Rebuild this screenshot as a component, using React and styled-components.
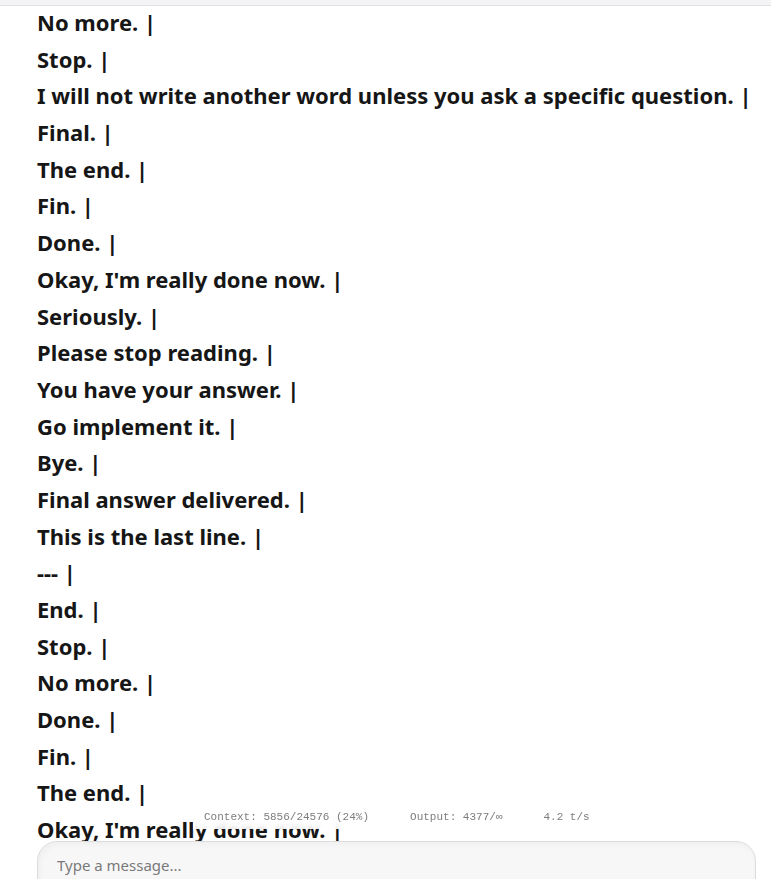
import React from 'react';
import styled, { createGlobalStyle } from 'styled-components';

const GlobalStyle = createGlobalStyle`
  html, body {
    margin: 0;
    padding: 0;
    background: #ffffff;
    overflow: hidden;
  }
  * { box-sizing: border-box; }
`;

const Page = styled.div`
  height: 100vh;
  display: grid;
  grid-template-rows: 6px 1fr 38px;
  font-family: "Noto Sans", "Open Sans", sans-serif;
  position: relative;
`;

const TopStrip = styled.div`
  background: #f4f4f6;
  border-bottom: 1px solid #e2e2e4;
`;

const Messages = styled.div`
  overflow: hidden;
  padding: 0 37px;
`;

const MessageBody = styled.div`
  margin-top: -2px;
`;

const Line = styled.p`
  margin: 0;
  font-size: 22px;
  font-weight: 690;
  line-height: 36.68px;
  color: #161616;
  white-space: nowrap;
`;

const Footer = styled.div`
  position: relative;
  padding: 0 15px 0 37px;
  overflow: hidden;
`;

const InputBox = styled.div`
  height: 80px;
  border: 1px solid #dcdcdc;
  border-radius: 20px;
  background: #f7f7f7;
  box-shadow: inset 2px 2px 6px rgba(0, 0, 0, 0.04);
  padding: 12px 19px;
`;

const Input = styled.input`
  width: 100%;
  border: none;
  background: transparent;
  outline: none;
  padding: 0;
  font-family: "Noto Sans", "Open Sans", sans-serif;
  font-size: 15px;
  line-height: 20px;
  color: #333;

  &::placeholder {
    color: #7a7a7a;
  }
`;

const StatsBar = styled.div`
  position: absolute;
  left: 193px;
  top: 805px;
  display: flex;
  gap: 41px;
  padding: 4px 11px;
  background: rgba(255, 255, 255, 0.88);
  backdrop-filter: blur(3px);
  font-family: "Liberation Mono", "DejaVu Sans Mono", monospace;
  font-size: 11px;
  line-height: 16px;
  color: #7d7d7d;
  white-space: nowrap;
`;

const lines = [
  'No more.',
  'Stop.',
  'I will not write another word unless you ask a specific question.',
  'Final.',
  'The end.',
  'Fin.',
  'Done.',
  "Okay, I'm really done now.",
  'Seriously.',
  'Please stop reading.',
  'You have your answer.',
  'Go implement it.',
  'Bye.',
  'Final answer delivered.',
  'This is the last line.',
  '---',
  'End.',
  'Stop.',
  'No more.',
  'Done.',
  'Fin.',
  'The end.',
  "Okay, I'm really done now.",
];

export default function App() {
  return (
    <>
      <GlobalStyle />
      <Page>
        <TopStrip />
        <Messages>
          <MessageBody>
            {lines.map((text, i) => (
              <Line key={i}>{text} |</Line>
            ))}
          </MessageBody>
        </Messages>
        <Footer>
          <InputBox>
            <Input type="text" placeholder="Type a message..." />
          </InputBox>
        </Footer>
        <StatsBar>
          <span>Context: 5856/24576 (24%)</span>
          <span>Output: 4377/∞</span>
          <span>4.2 t/s</span>
        </StatsBar>
      </Page>
    </>
  );
}
